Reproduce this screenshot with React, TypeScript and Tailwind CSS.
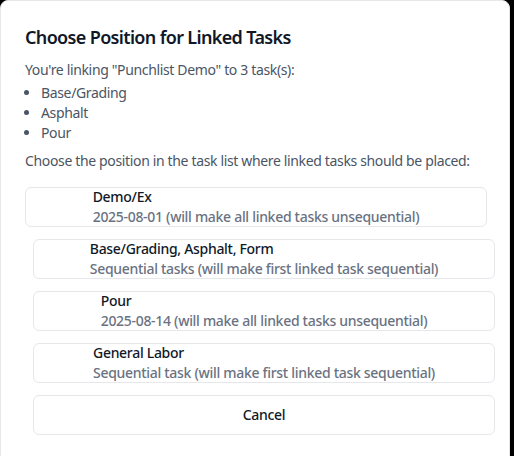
import React from "react";

interface Option {
  title: string;
  detail: string;
  shift: boolean;
}

const options: Option[] = [
  { title: "Demo/Ex", detail: "2025-08-01 (will make all linked tasks unsequential)", shift: false },
  { title: "Base/Grading, Asphalt, Form", detail: "Sequential tasks (will make first linked task sequential)", shift: true },
  { title: "Pour", detail: "2025-08-14 (will make all linked tasks unsequential)", shift: true },
  { title: "General Labor", detail: "Sequential task (will make first linked task sequential)", shift: true },
];

const linked = ["Base/Grading", "Asphalt", "Pour"];

export default function App() {
  return (
    <div className="h-screen overflow-hidden bg-black" style={{ fontFamily: '"Noto Sans", "Open Sans", sans-serif' }}>
      <div className="w-[510px] h-[470px] rounded-lg border border-gray-200 bg-white px-6 pt-[22px] tracking-[-0.35px]">
        <h2 className="text-lg leading-7 font-semibold text-gray-900 tracking-[-0.65px]">Choose Position for Linked Tasks</h2>
        <p className="mt-[9px] text-sm text-gray-600">You're linking "Punchlist Demo" to 3 task(s):</p>
        <ul className="mt-[3px] list-disc pl-4 text-sm text-gray-600">
          {linked.map((t) => (
            <li key={t}>{t}</li>
          ))}
        </ul>
        <p className="mt-2 text-sm text-gray-600">Choose the position in the task list where linked tasks should be placed:</p>
        <div className="mt-4 flex flex-col gap-3">
          {options.map((o) => (
            <button
              key={o.title}
              className={`flex h-10 w-[462px] flex-col items-center justify-center rounded-md border border-gray-200 bg-white text-sm tracking-[-0.3px] ${o.shift ? "ml-2" : ""}`}
            >
              <div className="text-left">
                <div className="font-medium text-gray-900">{o.title}</div>
                <div className="font-medium text-gray-500">{o.detail}</div>
              </div>
            </button>
          ))}
          <button className="ml-2 flex h-10 w-[462px] items-center justify-center rounded-md border border-gray-200 bg-white text-sm font-medium text-gray-900 tracking-[-0.3px]">
            Cancel
          </button>
        </div>
      </div>
    </div>
  );
}
